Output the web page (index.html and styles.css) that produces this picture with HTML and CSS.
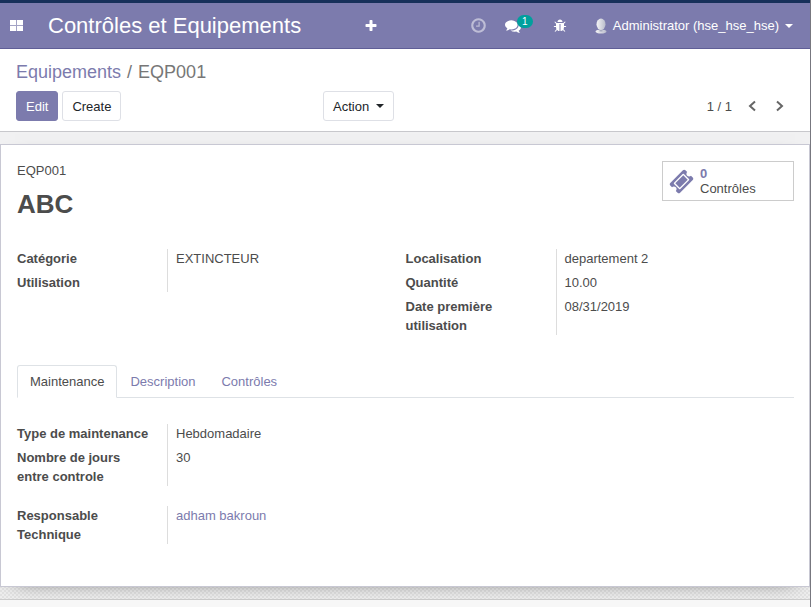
FILE: index.html
```html
<!DOCTYPE html>
<html lang="fr">
<head>
<meta charset="utf-8">
<meta name="viewport" content="width=device-width, initial-scale=1">
<title>EQP001 - Contrôles et Equipements</title>
<link rel="stylesheet" href="styles.css">
</head>
<body>
<header class="navbar">
  <div class="nav-left">
    <button class="nav-btn" type="button" aria-label="Applications">
      <svg width="13" height="11" viewBox="0 0 13 11"><path d="M0 0h6v5H0zM7 0h6v5H7zM0 6h6v5H0zM7 6h6v5H7z"/><path d="M0 5h13v1H0zM6 0h1v11H6z" opacity=".3"/></svg>
    </button>
    <a class="brand" href="#">Contrôles et Equipements</a>
  </div>
  <button class="nav-btn nav-plus" type="button" aria-label="Plus">
    <svg width="14" height="14" viewBox="0 0 1792 1792"><path d="M1600 736v192q0 40-28 68t-68 28h-416v416q0 40-28 68t-68 28h-192q-40 0-68-28t-28-68v-416h-416q-40 0-68-28t-28-68v-192q0-40 28-68t68-28h416v-416q0-40 28-68t68-28h192q40 0 68 28t28 68v416h416q40 0 68 28t28 68z"/></svg>
  </button>
  <nav class="nav-right">
    <button class="nav-btn nav-faded" type="button" aria-label="Activités">
      <svg width="17" height="17" viewBox="0 0 1792 1792"><path d="M1024 544v448q0 14-9 23t-23 9h-320q-14 0-23-9t-9-23v-64q0-14 9-23t23-9h224v-352q0-14 9-23t23-9h64q14 0 23 9t9 23zm416 352q0-148-73-273t-198-198-273-73-273 73-198 198-73 273 73 273 198 198 273 73 273-73 198-198 73-273zm224 0q0 209-103 385.500t-279.500 279.500-385.500 103-385.500-103-279.500-279.500-103-385.500 103-385.500 279.500-279.500 385.500-103 385.500 103 279.500 279.500 103 385.500z"/></svg>
    </button>
    <button class="nav-btn nav-messages" type="button" aria-label="Messages">
      <svg width="16" height="16" viewBox="0 0 1792 1792"><path d="M1408 768q0 139-94 257t-256.500 186.500-353.500 68.500q-86 0-176-16-124 88-278 128-36 9-86 16h-3q-11 0-20.500-8t-11.500-21q-1-3-1-6.500t.5-6.500 2-6l2.500-5 3.500-5.500 4-5 4.500-5 4-4.500q5-6 23-25t26-29.500 22.500-29 25-38.500 20.500-44q-124-72-195-177t-71-224q0-139 94-257t256.500-186.500 353.500-68.500 353.500 68.500 256.500 186.500 94 257zm384 256q0 120-71 224.500t-195 176.500q10 24 20.500 44t25 38.500 22.500 29 26 29.500 23 25q1 1 4 4.500t4.500 5 4 5 3.500 5.500l2.500 5 2 6 .5 6.500-1 6.500q-3 14-13 22t-22 7q-50-7-86-16-154-40-278-128-90 16-176 16-271 0-472-132 58 4 88 4 161 0 309-45t264-129q125-92 192-212t67-254q0-77-23-152 129 71 204 178t75 230z"/></svg>
      <span class="badge">1</span>
    </button>
    <button class="nav-btn nav-bug" type="button" aria-label="Débogage">
      <svg width="14" height="14" viewBox="0 0 1792 1792"><path d="M1696 960q0 26-19 45t-45 19h-224q0 171-67 290l208 209q19 19 19 45t-19 45q-18 19-45 19t-45-19l-198-197q-5 5-15 13t-42 28.500-65 36.500-82 29-97 13v-896h-128v896q-51 0-101.500-13.500t-87-33-66-39-43.500-32.500l-15-14-183 207q-20 21-48 21-24 0-43-16-19-18-20.500-44.500t15.500-46.500l202-227q-58-114-58-274h-224q-26 0-45-19t-19-45 19-45 45-19h224v-294l-173-173q-19-19-19-45t19-45 45-19 45 19l173 173h844l173-173q19-19 45-19t45 19 19 45-19 45l-173 173v294h224q26 0 45 19t19 45zm-480-576h-640q0-133 93.500-226.500t226.500-93.500 226.500 93.500 93.500 226.500z"/></svg>
    </button>
    <button class="nav-btn nav-user" type="button">
      <svg width="12" height="16" viewBox="0 0 12 16">
        <defs><linearGradient id="avatar" x1="0" x2="1"><stop offset="0" stop-color="#f4f4f6"/><stop offset="1" stop-color="#b9bccb"/></linearGradient></defs>
        <ellipse cx="6" cy="13.500" rx="5.500" ry="2" fill="url(#avatar)"/>
        <path d="M4.500 10h3v3.500h-3z" fill="#a9adc0"/>
        <ellipse cx="6" cy="6.200" rx="4.500" ry="5.700" fill="url(#avatar)"/>
      </svg>
      <span>Administrator (hse_hse_hse)</span>
      <i class="caret"></i>
    </button>
  </nav>
</header>

<section class="control-panel">
  <div class="breadcrumb"><a href="#">Equipements</a><span>/</span><span>EQP001</span></div>
  <div class="toolbar">
    <div class="actions">
      <button class="btn btn-primary" type="button">Edit</button>
      <button class="btn" type="button">Create</button>
    </div>
    <button class="btn" type="button">Action <i class="caret"></i></button>
    <div class="pager">
      <span>1 / 1</span>
      <button type="button" aria-label="Précédent"><svg width="10" height="12" viewBox="0 0 10 12"><path d="M8 1.500L3 6l5 4.500"/></svg></button>
      <button type="button" aria-label="Suivant"><svg width="10" height="12" viewBox="0 0 10 12"><path d="M2 1.500L7 6l-5 4.500"/></svg></button>
    </div>
  </div>
</section>

<main class="form-view">
  <article class="sheet">
    <div class="sheet-head">
      <div>
        <div>EQP001</div>
        <h1>ABC</h1>
      </div>
      <button class="stat" type="button">
        <svg width="25" height="25" viewBox="0 0 1792 1792"><path d="M1024 452l316 316-572 572-316-316zm-211 979l618-618q19-19 19-45t-19-45l-362-362q-18-18-45-18t-45 18l-618 618q-19 19-19 45t19 45l362 362q18 18 45 18t45-18zm889-637l-907 908q-37 37-90.500 37t-90.500-37l-126-126q56-56 56-136t-56-136-136-56-136 56l-125-126q-37-37-37-90.500t37-90.500l907-906q37-37 90.500-37t90.500 37l125 125q-56 56-56 136t56 136 136 56 136-56l126 125q37 37 37 90.500t-37 90.500z"/></svg>
        <span class="stat-info"><span class="stat-value">0</span><span>Contrôles</span></span>
      </button>
    </div>

    <div class="groups">
      <dl class="group">
        <div><dt>Catégorie</dt><dd>EXTINCTEUR</dd></div>
        <div><dt>Utilisation</dt><dd></dd></div>
      </dl>
      <dl class="group">
        <div><dt>Localisation</dt><dd>departement 2</dd></div>
        <div><dt>Quantité</dt><dd>10.00</dd></div>
        <div><dt>Date première utilisation</dt><dd>08/31/2019</dd></div>
      </dl>
    </div>

    <nav class="tabs">
      <a class="tab active" href="#">Maintenance</a>
      <a class="tab" href="#">Description</a>
      <a class="tab" href="#">Contrôles</a>
    </nav>

    <div class="groups tab-page">
      <dl class="group">
        <div><dt>Type de maintenance</dt><dd>Hebdomadaire</dd></div>
        <div><dt>Nombre de jours entre controle</dt><dd>30</dd></div>
      </dl>
      <dl class="group group-next">
        <div><dt>Responsable Technique</dt><dd><a href="#">adham bakroun</a></dd></div>
      </dl>
    </div>
  </article>
</main>
<footer class="chatter"></footer>
</body>
</html>
```

FILE: styles.css
```css
* { box-sizing: border-box; }

body {
  margin: 0;
  min-height: 100vh;
  display: flex;
  flex-direction: column;
  border-right: 1px solid #77777f;
  background: #f7f7f7;
  color: #4c4c4c;
  font: 13px/19px "Liberation Sans", Arial, sans-serif;
}

a { color: #7c7bad; text-decoration: none; }
button { font: inherit; color: inherit; cursor: pointer; }
svg { display: block; flex: none; }

.caret {
  display: inline-block;
  border: 4px solid transparent;
  border-top-color: currentColor;
  border-bottom: 0;
}

/* Navigation bar */
.navbar {
  display: grid;
  grid-template-columns: 356px auto 1fr;
  align-items: center;
  height: 49px;
  border-top: 3px solid #17305a;
  border-bottom: 1px solid #5f5e97;
  background: #7c7bad;
  color: #fff;
}
.nav-left { display: flex; align-items: center; gap: 17px; padding-left: 2px; }
.brand { color: #fff; font-size: 22px; line-height: 44px; }
.nav-btn {
  display: flex;
  align-items: center;
  padding: 8px;
  border: 0;
  background: none;
}
.nav-btn svg { fill: currentColor; }
.nav-right { display: flex; align-items: center; justify-content: flex-end; padding-right: 9px; }
.nav-faded { opacity: .5; }
.nav-messages { position: relative; margin-left: 2px; padding-right: 24px; }
.badge {
  position: absolute;
  left: 20px;
  top: 5px;
  width: 16px;
  height: 13px;
  border-radius: 7px;
  background: #00a09d;
  font-size: 10px;
  line-height: 13px;
  text-align: center;
}
.nav-bug { margin-right: 12px; }
.nav-user { gap: 6px; }

/* Control panel */
.control-panel {
  padding: 12px 16px 10px;
  border-bottom: 1px solid #c8c8cc;
  background: #fff;
}
.breadcrumb {
  display: flex;
  gap: 6px;
  margin-bottom: 8px;
  color: #777;
  font-size: 18px;
  line-height: 22px;
}
.toolbar {
  display: grid;
  grid-template-columns: 307px auto 1fr;
  align-items: center;
}
.actions { display: flex; gap: 4px; }
.btn {
  height: 30px;
  padding: 0 9px;
  border: 1px solid #dee0e6;
  border-radius: 3px;
  background: #fff;
  color: #212529;
}
.btn .caret { margin-left: 3px; vertical-align: 3px; }
.btn-primary { border-color: #7c7bad; background: #7c7bad; color: #fff; }
.pager { display: flex; align-items: center; justify-content: flex-end; gap: 8px; padding-right: 4px; }
.pager button { padding: 4px 5px; border: 0; background: none; }
.pager span { margin-right: 2px; }
.pager svg { fill: none; stroke: #666; stroke-width: 2px; }

/* Form */
.form-view {
  padding: 12px 0;
  border-bottom: 1px solid #ccc;
  background: repeating-conic-gradient(#e2e2e2 0 25%, #eee 0 50%) 0 0 / 4px 4px;
  box-shadow: inset 0 13px #f1f1f2;
}
.sheet {
  padding: 16px 15px 42px 16px;
  border: 1px solid #c8c8d3;
  background: #fff;
  box-shadow: 0 5px 20px -15px #000;
}
.sheet-head { display: flex; justify-content: space-between; align-items: flex-start; }
h1 { margin: 8px 0 0; font-size: 26px; line-height: 32px; }
.stat {
  display: flex;
  align-items: center;
  gap: 6px;
  width: 132px;
  height: 40px;
  padding: 0 6px;
  border: 1px solid #ccc;
  background: #fff;
  text-align: left;
}
.stat svg { fill: #7c7bad; }
.stat-info { display: grid; line-height: 15px; }
.stat-value { color: #7c7bad; font-weight: bold; }

.groups {
  display: grid;
  grid-template-columns: 1fr 1fr;
  align-items: start;
  margin-top: 29px;
}
.group {
  margin: 0;
  display: grid;
  gap: 5px;
  background: linear-gradient(#ddd, #ddd) 150px 0 / 1px 100% no-repeat;
}
.group div { display: grid; grid-template-columns: 150px 1fr; }
.group dt { padding-right: 16px; font-weight: bold; }
.group dd { margin: 0; padding-left: 9px; }

.tabs { display: flex; margin-top: 30px; border-bottom: 1px solid #dee2e6; }
.tab {
  margin-bottom: -1px;
  padding: 6px 12px;
  border: 1px solid transparent;
  border-radius: 3px 3px 0 0;
}
.tab.active {
  border-color: #dee2e6;
  border-bottom-color: #fff;
  background: #fff;
  color: #4c4c4c;
}
.tab-page { margin-top: 26px; row-gap: 20px; }
.group-next { grid-column: 1; }

.chatter { flex: 1; background: #f7f7f7; }
```
